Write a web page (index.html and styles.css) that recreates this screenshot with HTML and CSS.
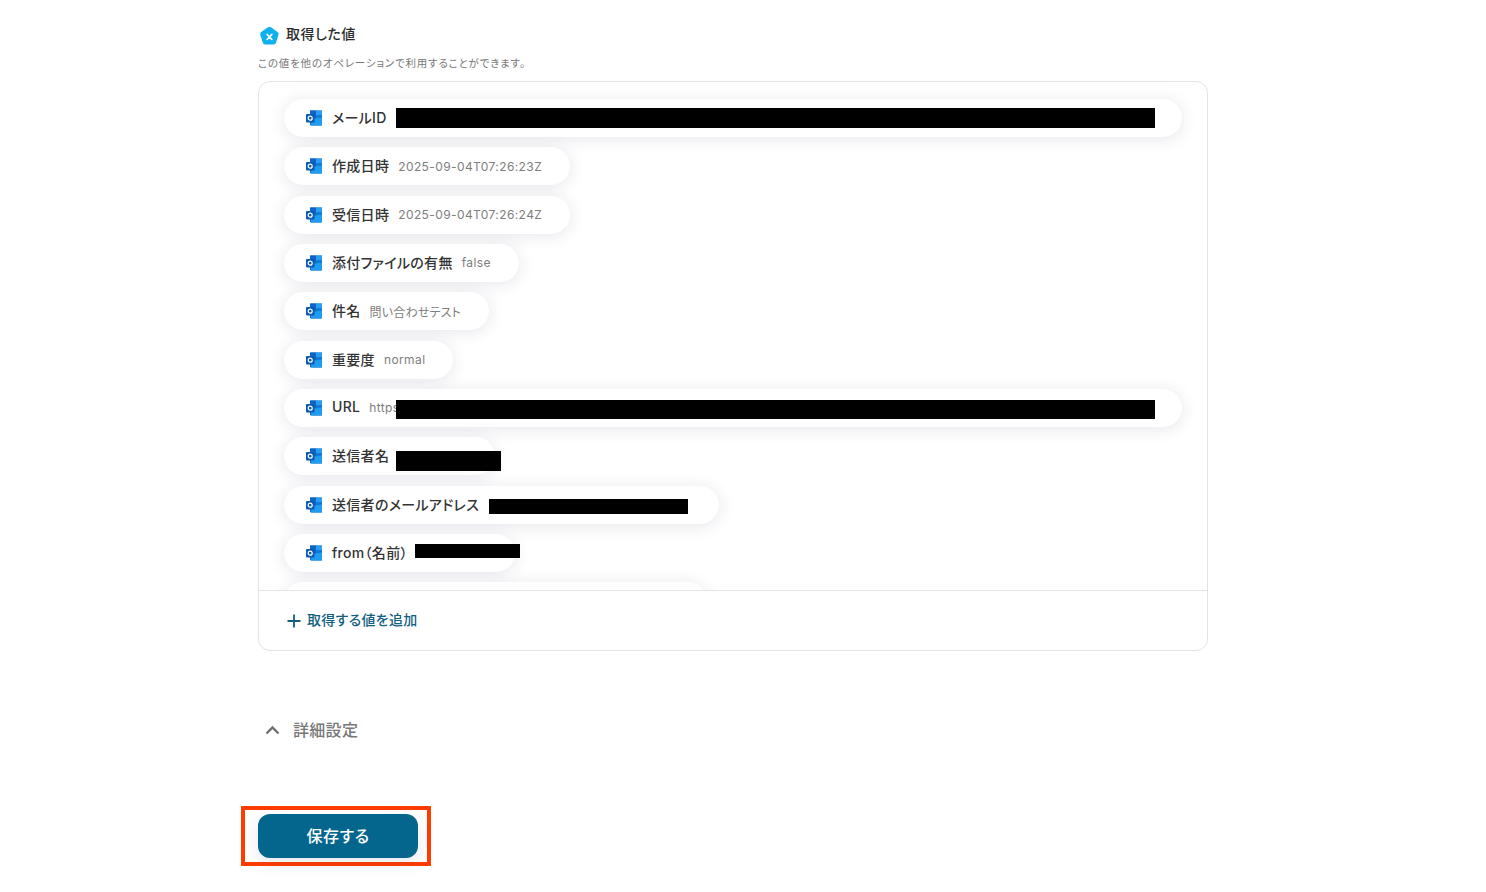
FILE: index.html
```html
<!DOCTYPE html>
<html lang="ja">
<head>
  <meta charset="UTF-8">
  <title>取得した値</title>
  <link rel="stylesheet" href="styles.css">
</head>
<body>
  <svg width="0" height="0" class="defs">
    <symbol id="outlook" viewBox="0 0 16 16">
      <rect x="4" y="0.500" width="12" height="15" rx="1" fill="#1066c8"/>
      <rect x="4" y="0.500" width="6" height="5" fill="#0c64c4"/>
      <rect x="10" y="0.500" width="6" height="5" fill="#2a9df0"/>
      <rect x="10" y="5.500" width="6" height="5" fill="#0f78d4"/>
      <path d="M5 9l11-1.500V15.500H5z" fill="#1f9cf0"/>
      <rect x="0" y="4" width="8.500" height="8.500" rx="1" fill="#0a5bb0"/>
      <circle cx="4.200" cy="8.200" r="2" fill="none" stroke="#fff" stroke-width="1.200"/>
    </symbol>
  </svg>

  <main class="page">
    <div class="section-title">
      <svg class="title-icon" width="21" height="21" viewBox="0 0 20 20">
        <path d="M8.600 1.200a2.400 2.400 0 0 1 2.800 0l6.300 4.500a2.400 2.400 0 0 1 .9 2.700l-2.400 7.500a2.400 2.400 0 0 1-2.300 1.700H5.900a2.400 2.400 0 0 1-2.300-1.700L1.200 8.400a2.400 2.400 0 0 1 .9-2.700z" fill="#0fb0ee"/>
        <path d="M7.700 8l4.600 4.800M12.300 8l-4.600 4.800" stroke="#fff" stroke-width="1.500" stroke-linecap="round"/>
      </svg>
      <span class="section-name">取得した値</span>
    </div>
    <p class="section-note">この値を他のオペレーションで利用することができます。</p>

    <div class="value-box">
      <ul class="value-list">
        <li class="pill pill-full">
          <svg class="app-icon"><use href="#outlook"/></svg>
          <span class="label">メールID</span>
          <span class="mask mask-long"></span>
        </li>
        <li class="pill">
          <svg class="app-icon"><use href="#outlook"/></svg>
          <span class="label">作成日時</span>
          <span class="value">2025-09-04T07:26:23Z</span>
        </li>
        <li class="pill">
          <svg class="app-icon"><use href="#outlook"/></svg>
          <span class="label">受信日時</span>
          <span class="value">2025-09-04T07:26:24Z</span>
        </li>
        <li class="pill">
          <svg class="app-icon"><use href="#outlook"/></svg>
          <span class="label">添付ファイルの有無</span>
          <span class="value">false</span>
        </li>
        <li class="pill">
          <svg class="app-icon"><use href="#outlook"/></svg>
          <span class="label">件名</span>
          <span class="value value-ja">問い合わせテスト</span>
        </li>
        <li class="pill">
          <svg class="app-icon"><use href="#outlook"/></svg>
          <span class="label">重要度</span>
          <span class="value">normal</span>
        </li>
        <li class="pill pill-full">
          <svg class="app-icon"><use href="#outlook"/></svg>
          <span class="label">URL</span>
          <span class="value">https</span>
          <span class="mask mask-long mask-url"></span>
        </li>
        <li class="pill pill-sender">
          <svg class="app-icon"><use href="#outlook"/></svg>
          <span class="label">送信者名</span>
          <span class="mask mask-sender"></span>
        </li>
        <li class="pill pill-address">
          <svg class="app-icon"><use href="#outlook"/></svg>
          <span class="label">送信者のメールアドレス</span>
          <span class="mask mask-address"></span>
        </li>
        <li class="pill pill-from">
          <svg class="app-icon"><use href="#outlook"/></svg>
          <span class="label">from（名前）</span>
          <span class="mask mask-from"></span>
        </li>
        <li class="pill pill-last"></li>
      </ul>
      <div class="add-row">
        <svg width="14" height="14" viewBox="0 0 14 14">
          <path d="M7 .5v13M.5 7h13" stroke="#11607f" stroke-width="1.800"/>
        </svg>
        <span class="add-text">取得する値を追加</span>
      </div>
    </div>

    <div class="advanced">
      <svg width="15" height="10" viewBox="0 0 15 10">
        <path d="M1.500 8.500l6-6 6 6" fill="none" stroke="#6f6f6f" stroke-width="2.400"/>
      </svg>
      <span class="advanced-text">詳細設定</span>
    </div>

    <div class="save-mark">
      <button class="save-btn"><span class="save-text">保存する</span></button>
    </div>
  </main>
</body>
</html>
```

FILE: styles.css
```css
* {
  box-sizing: border-box;
}

body {
  margin: 0;
  background: #fff;
  font-family: "Inter", "Noto Sans CJK JP", sans-serif;
  font-feature-settings: "palt";
  color: #333;
  height: 892px;
  overflow: hidden;
}

.defs {
  position: absolute;
}

.page {
  width: 950px;
  margin-left: 258px;
  padding-top: 24px;
}

/* 見出し */
.section-title {
  display: flex;
  align-items: center;
  gap: 6px;
  height: 22px;
  font-size: 14px;
  font-weight: 500;
  color: #2b2b2b;
}

.title-icon {
  margin-left: 1px;
  margin-top: 3px;
}

.section-name {
  margin-bottom: 4px;
  letter-spacing: 0.5px;
}

.section-note {
  margin: 10px 0 9px;
  font-size: 10.500px;
  letter-spacing: 0.8px;
  line-height: 16px;
  color: #777;
}

/* 値の枠 */
.value-box {
  height: 570px;
  border: 1px solid #e3e3e6;
  border-radius: 12px;
  display: flex;
  flex-direction: column;
}

.value-list {
  list-style: none;
  margin: 0;
  padding: 17px 0 0 25px;
  height: 508px;
  overflow: hidden;
  display: flex;
  flex-direction: column;
  align-items: flex-start;
  gap: 10.330px;
  flex: none;
}

.pill {
  position: relative;
  flex: none;
  display: flex;
  align-items: center;
  height: 38px;
  padding: 0 28px 0 22px;
  background: #fff;
  border-radius: 19px;
  box-shadow: 0 2px 16px rgba(60, 50, 90, 0.13);
}

.pill-full {
  width: 898px;
}

.pill-sender {
  width: 211px;
}

.pill-address {
  width: 435px;
}

.pill-from {
  width: 231px;
}

.pill-last {
  width: 423px;
}

.app-icon {
  width: 16px;
  height: 16px;
  flex: none;
  margin-right: 10px;
}

.label {
  margin-bottom: 2px;
  font-size: 14px;
  font-weight: 500;
  letter-spacing: 0.3px;
  color: #333;
  white-space: nowrap;
}

.value {
  margin-left: 9px;
  font-size: 12px;
  color: #7d7d7d;
  letter-spacing: 0.4px;
  white-space: nowrap;
}

.value-ja {
  font-size: 12px;
  letter-spacing: 0.2px;
}

/* 黒塗り */
.mask {
  position: absolute;
  margin: 0;
  background: #000;
}

.mask-long {
  left: 112px;
  top: 9px;
  width: 759px;
  height: 20px;
}

.mask-url {
  top: 11px;
  height: 19px;
}

.mask-sender {
  left: 112px;
  top: 14px;
  width: 105px;
  height: 20px;
}

.mask-address {
  left: 205px;
  top: 13px;
  width: 199px;
  height: 15px;
}

.mask-from {
  left: 131px;
  top: 10px;
  width: 105px;
  height: 14px;
}

/* 追加ボタン行 */
.add-row {
  flex: 1;
  display: flex;
  align-items: center;
  gap: 6px;
  padding-left: 28px;
  border-top: 1px solid #e3e3e6;
  font-size: 14px;
  font-weight: 500;
  letter-spacing: 0.3px;
  color: #11607f;
}

.add-text {
  margin-bottom: 3px;
}

.advanced {
  display: flex;
  align-items: center;
  gap: 13px;
  margin: 68px 0 0 7px;
  height: 22px;
  font-size: 16px;
  font-weight: 500;
  color: #777;
}

.advanced-text {
  margin-bottom: 2px;
  letter-spacing: 0.3px;
}

/* 保存ボタン */
.save-mark {
  display: inline-flex;
  margin: 65px 0 0 -17px;
  padding: 4px 9px 4px 13px;
  border: 4px solid #ff3c00;
}

.save-btn {
  width: 160px;
  height: 44px;
  border: none;
  border-radius: 12px;
  background: #05668d;
  color: #fff;
  font-family: inherit;
  font-feature-settings: inherit;
  font-size: 16px;
  font-weight: 500;
  letter-spacing: 0.6px;
  box-shadow: 0 6px 16px rgba(60, 70, 120, 0.12);
}

.save-text {
  display: block;
  margin-bottom: 2px;
}
```
